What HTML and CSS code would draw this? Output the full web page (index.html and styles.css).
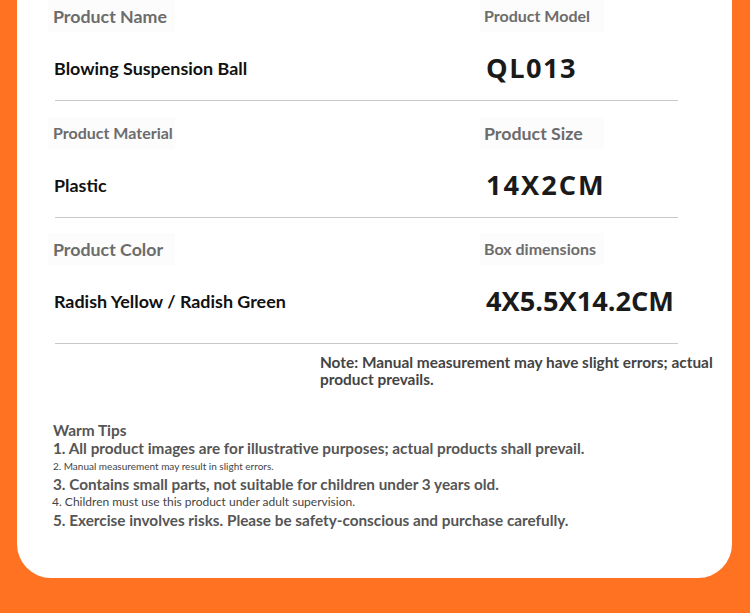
FILE: index.html
```html
<!DOCTYPE html>
<html>
<head>
<meta charset="utf-8">
<link rel="stylesheet" href="styles.css">
</head>
<body>
<div class="card">
  <div class="row">
    <div class="cell">
      <div class="label big">Product Name</div>
      <div class="value">Blowing Suspension Ball</div>
    </div>
    <div class="cell">
      <div class="label small">Product Model</div>
      <div class="code spaced">QL013</div>
    </div>
  </div>
  <div class="divider"></div>
  <div class="row second">
    <div class="cell">
      <div class="label small">Product Material</div>
      <div class="value">Plastic</div>
    </div>
    <div class="cell">
      <div class="label big">Product Size</div>
      <div class="code spaced wide">14X2CM</div>
    </div>
  </div>
  <div class="divider"></div>
  <div class="row third">
    <div class="cell">
      <div class="label big">Product Color</div>
      <div class="value">Radish Yellow / Radish Green</div>
    </div>
    <div class="cell">
      <div class="label small">Box dimensions</div>
      <div class="code">4X5.5X14.2CM</div>
    </div>
  </div>
  <div class="divider last"></div>
  <p class="note">Note: Manual measurement may have slight errors; actual product prevails.</p>
  <div class="tips">
    <div class="tips-title">Warm Tips</div>
    <div class="tip">1. All product images are for illustrative purposes; actual products shall prevail.</div>
    <div class="tip tiny">2. Manual measurement may result in slight errors.</div>
    <div class="tip">3. Contains small parts, not suitable for children under 3 years old.</div>
    <div class="tip mini">4. Children must use this product under adult supervision.</div>
    <div class="tip">5. Exercise involves risks. Please be safety-conscious and purchase carefully.</div>
  </div>
</div>
</body>
</html>
```

FILE: styles.css
```css
html, body {
  margin: 0;
  padding: 0;
  background: #fe7221;
  font-family: Lato, "Open Sans", sans-serif;
}
body {
  height: 613px;
  overflow: hidden;
}
.card {
  margin: 0 18px 0 17px;
  height: 578px;
  background: #ffffff;
  border-radius: 0 0 34px 34px;
  padding-left: 31px;
  box-sizing: border-box;
}
.row {
  display: grid;
  grid-template-columns: 432px 1fr;
}
.row.second { margin-top: 16px; }
.row.third { margin-top: 15px; }
.label {
  display: inline-block;
  width: 127px;
  height: 32px;
  line-height: 32px;
  padding-left: 5px;
  box-sizing: border-box;
  background: #fcfcfc;
  color: #6c6c6c;
  font-weight: 700;
  white-space: nowrap;
}
.cell:last-child .label {
  padding-left: 4px;
  width: 124px;
}
.label.big { font-size: 17.8px; }
.label.small { font-size: 16px; }
.value {
  margin-top: 20px;
  height: 32px;
  line-height: 32px;
  padding-left: 6px;
  font-size: 17.9px;
  font-weight: 700;
  color: #111;
}
.code {
  margin-top: 20px;
  height: 32px;
  line-height: 32px;
  padding-left: 6px;
  font-family: "Open Sans", sans-serif;
  font-size: 27.2px;
  font-weight: 700;
  color: #1a1a1a;
}
.code.spaced { letter-spacing: 1.5px; }
.code.spaced.wide { letter-spacing: 2px; }
.divider {
  margin: 16px 0 0 7px;
  width: 623px;
  height: 1px;
  background: #c9c9c9;
}
.divider.last { margin-top: 26px; }
.note {
  margin: 10px 0 0 272px;
  width: 405px;
  font-size: 15.4px;
  line-height: 17px;
  font-weight: 700;
  color: #444;
}
.tips {
  margin-top: 33px;
  padding-left: 5px;
  color: #555;
}
.tips-title {
  font-size: 15.4px;
  line-height: 18px;
  font-weight: 700;
}
.tip {
  font-size: 15.3px;
  line-height: 18px;
  font-weight: 700;
}
.tip.tiny {
  font-size: 10px;
  font-weight: 400;
  color: #444;
}
.tip.mini {
  font-size: 12px;
  font-weight: 400;
  color: #444;
  margin-left: -1px;
}
```
